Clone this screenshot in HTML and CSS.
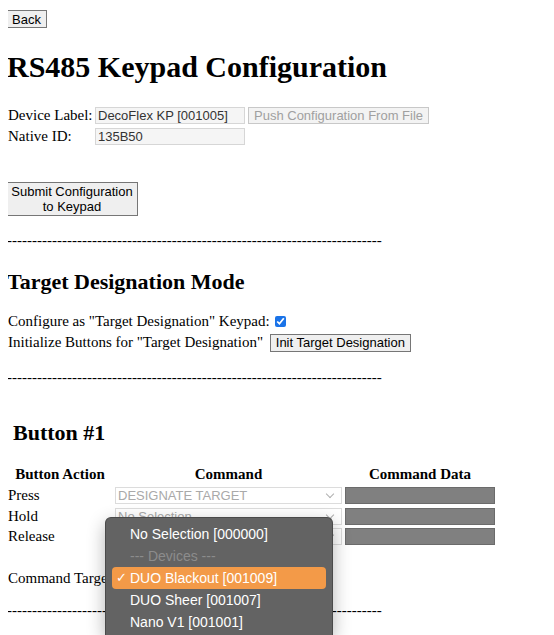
FILE: index.html
```html
<!DOCTYPE html>
<html lang="en">
<head>
    <meta charset="UTF-8" />
    <meta name="viewport" content="width=device-width, initial-scale=1.0" />
    <title>RS485 Keypad Configuration</title>
    <link rel="stylesheet" href="styles.css">
</head>
<body>
    <button class="btn back">Back</button>

    <h1>RS485 Keypad Configuration</h1>

    <div class="device">
        <label>Device Label:</label>
        <div class="row">
            <input class="field" type="text" value="DecoFlex KP [001005]" />
            <button class="btn" disabled>Push Configuration From File</button>
        </div>
        <label>Native ID:</label>
        <div class="row">
            <input class="field" type="text" value="135B50" />
        </div>
    </div>

    <button class="btn submit">Submit Configuration to Keypad</button>

    <div class="divider">---------------------------------------------------------------------------</div>

    <h2>Target Designation Mode</h2>
    <div class="line">Configure as "Target Designation" Keypad: <input class="check" type="checkbox" checked /></div>
    <div class="line">Initialize Buttons for "Target Designation" <button class="btn init">Init Target Designation</button></div>

    <div class="divider">---------------------------------------------------------------------------</div>

    <h2 class="button-title">Button #1</h2>
    <div class="actions">
        <div class="head">Button Action</div>
        <div class="head">Command</div>
        <div class="head">Command Data</div>

        <div>Press</div>
        <div class="select">DESIGNATE TARGET</div>
        <div class="data"></div>

        <div>Hold</div>
        <div class="select">No Selection</div>
        <div class="data"></div>

        <div>Release</div>
        <div class="select">No Selection</div>
        <div class="data"></div>
    </div>

    <div class="line target">Command Target:</div>

    <div class="divider">---------------------------------------------------------------------------</div>

    <!-- open target picker -->
    <ul class="menu">
        <li>No Selection [000000]</li>
        <li class="group">--- Devices ---</li>
        <li class="picked"><span class="tick">&#10003;</span>DUO Blackout [001009]</li>
        <li>DUO Sheer [001007]</li>
        <li>Nano V1 [001001]</li>
    </ul>
</body>
</html>
```

FILE: styles.css
```css
html {
    height: 100%;
    overflow: hidden;
}
body {
    font-family: "Liberation Serif", serif;
    font-size: 15px;
    margin: 8px;
    min-height: calc(100% - 8px);
    position: relative;
}
.btn {
    font-family: "Liberation Sans", Arial, sans-serif;
    font-size: 13px;
    color: #000;
    background: #efefef;
    border: 1px solid #767676;
    border-radius: 0;
    padding: 0 5px;
    margin: 0;
}
.btn:disabled {
    color: #a0a0a0;
    border-color: #c8c8c8;
    background: #f3f3f3;
}
.back {
    display: block;
    height: 18px;
    margin: 2px 0 0 -2px;
}
h1 {
    font-size: 30px;
    margin: 22px 0 23px -1px;
}
h2 {
    font-size: 22px;
    margin: 20px 0 16px -1px;
}
.device {
    display: grid;
    grid-template-columns: 87px auto;
    row-gap: 4px;
    align-items: center;
    white-space: nowrap;
}
.row {
    display: flex;
    gap: 3px;
}
.field {
    font-family: "Liberation Sans", Arial, sans-serif;
    font-size: 13px;
    width: 150px;
    height: 17px;
    box-sizing: border-box;
    border: 1px solid #d6d6d6;
    background: #f5f5f5;
    color: #333;
    padding: 0 2px;
    margin: 0;
}
.row .btn {
    height: 17px;
    line-height: 15px;
}
.submit {
    display: block;
    width: 132px;
    height: 34px;
    margin: 37px 0 0 -2px;
    padding: 0 4px;
    line-height: 15px;
}
.divider {
    margin-top: 16px;
    margin-left: -1px;
    white-space: nowrap;
    overflow: hidden;
}
.line {
    line-height: 21px;
}
.check {
    margin: 0 0 0 2px;
    width: 11px;
    height: 11px;
    accent-color: #1a73e8;
    vertical-align: -1px;
}
.init {
    margin-left: 3px;
    height: 18px;
}
.button-title {
    margin: 34px 0 20px 5px;
}
.actions {
    display: grid;
    grid-template-columns: 104px 227px 150px;
    column-gap: 3px;
    row-gap: 3.75px;
    align-items: center;
}
.head {
    font-weight: bold;
    text-align: center;
}
.select {
    height: 17px;
    box-sizing: border-box;
    border: 1px solid #dcdcdc;
    background: #fff;
    color: #a9a9a9;
    font-family: "Liberation Sans", Arial, sans-serif;
    font-size: 13px;
    line-height: 15px;
    padding: 0 2px;
    position: relative;
    overflow: hidden;
}
.select::after {
    content: "";
    position: absolute;
    right: 8px;
    top: 3px;
    width: 5px;
    height: 5px;
    border-right: 1px solid #b0b0b0;
    border-bottom: 1px solid #b0b0b0;
    transform: rotate(45deg);
}
.data {
    height: 17px;
    background: #808080;
    border: 1px solid #6b6b6b;
    box-sizing: border-box;
}
.target {
    margin-top: 23px;
    white-space: nowrap;
}
.target + .divider {
    margin-top: 13px;
}
.menu {
    position: absolute;
    left: 97px;
    top: 509px;
    width: 228px;
    height: 118px;
    margin: 0;
    padding: 5px 6px 0;
    box-sizing: border-box;
    list-style: none;
    background: #636363;
    border: 1px solid #4a4a4a;
    border-bottom: none;
    border-radius: 6px 6px 0 0;
    box-shadow: 0 6px 18px rgba(0, 0, 0, 0.3);
    font-family: "Liberation Sans", Arial, sans-serif;
    font-size: 14px;
    color: #fff;
    overflow: hidden;
}
.menu li {
    height: 22px;
    line-height: 22px;
    padding-left: 18px;
    border-radius: 4px;
    position: relative;
}
.menu .group {
    color: #8c8c8c;
}
.menu .picked {
    background: #f39a48;
}
.tick {
    position: absolute;
    left: 4px;
    font-size: 13px;
}
```
